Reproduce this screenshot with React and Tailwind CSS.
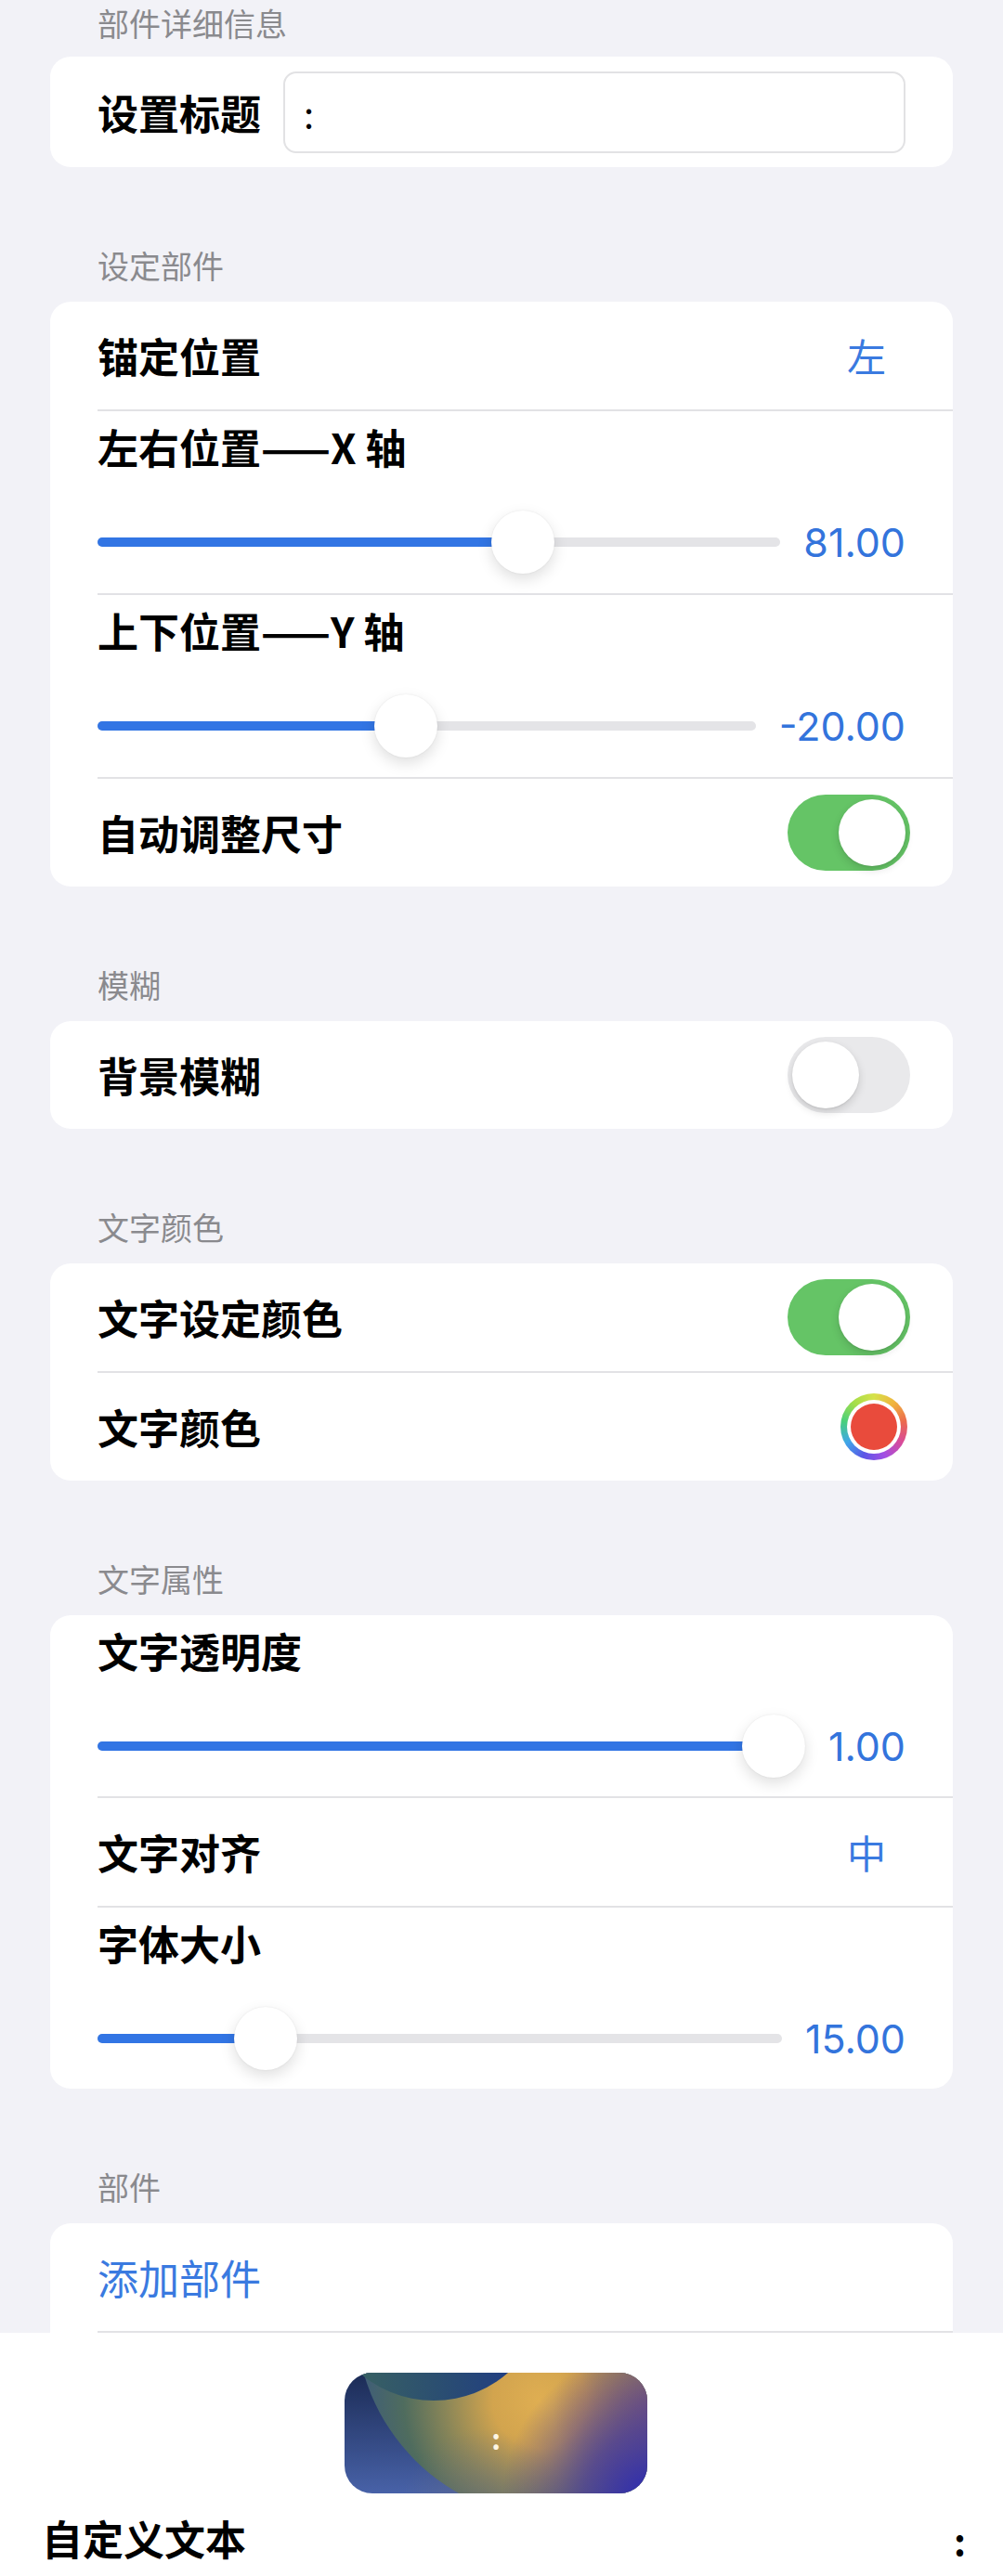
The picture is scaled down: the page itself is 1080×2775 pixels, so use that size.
import React from 'react';

const LABEL = "text-[44px] leading-[52px] font-semibold text-black whitespace-nowrap";
const NUM = "font-['Inter','Roboto',sans-serif] text-[43px] leading-[52px] text-[#3374dc] whitespace-nowrap";

function Header({ children, first }) {
  return (
    <div className={first ? "pt-[5px] pb-[16px] px-[105px]" : "pt-[86px] pb-[19px] px-[105px]"}>
      <div className="text-[34px] leading-[40px] text-[#8a8a8e]">{children}</div>
    </div>
  );
}

function Card({ children, cut }) {
  return (
    <div className={cut ? "mx-[54px] bg-white rounded-t-[22px] overflow-hidden" : "mx-[54px] bg-white rounded-[22px] overflow-hidden"}>
      {children}
    </div>
  );
}

function Divider() {
  return <div className="ml-[51px] h-[2px] bg-[#e2e2e5]" />;
}

function ValueRow({ label, value }) {
  return (
    <div className="h-[116px] pl-[51px] pr-[72px] flex items-center justify-between">
      <div className={LABEL}>{label}</div>
      <div className="text-[42px] leading-[52px] text-[#3a7ae0]">{value}</div>
    </div>
  );
}

function Toggle({ on }) {
  return (
    <div className={on ? "w-[132px] h-[82px] rounded-full p-[5px] flex justify-end bg-[#65c466]" : "w-[132px] h-[82px] rounded-full p-[5px] flex justify-start bg-[#e9e9eb]"}>
      <div className="w-[72px] h-[72px] rounded-full bg-white shadow-[0_4px_10px_rgba(0,0,0,0.14),0_1px_2px_rgba(0,0,0,0.08)]" />
    </div>
  );
}

function ToggleRow({ label, on }) {
  return (
    <div className="h-[116px] pl-[51px] pr-[46px] flex items-center justify-between">
      <div className={LABEL}>{label}</div>
      <Toggle on={on} />
    </div>
  );
}

function SliderRow({ label, value, frac, h }) {
  return (
    <div className={h + " px-[51px] pt-[12px] flex flex-col"}>
      <div className={LABEL}>{label}</div>
      <div className="mt-[42px] flex items-center gap-[25px]">
        <div className="relative flex-1 h-[70px]">
          <div className="absolute left-0 right-0 top-[30px] h-[10px] rounded-full bg-[#e4e4e7]" />
          <div
            className="absolute left-0 top-[30px] h-[10px] rounded-full bg-[#3275e4]"
            style={{ width: `calc(34px + ${frac} * (100% - 68px))` }}
          />
          <div
            className="absolute top-[1px] h-[68px] w-[68px] rounded-full bg-white shadow-[0_6px_16px_rgba(0,0,0,0.13),0_0_2px_rgba(0,0,0,0.08)]"
            style={{ left: `calc(${frac} * (100% - 68px))` }}
          />
        </div>
        <div className={NUM}>{value}</div>
      </div>
    </div>
  );
}

function ColorWell() {
  return (
    <div className="w-[72px] h-[72px] rounded-full p-[7px] bg-[conic-gradient(from_0deg,#d6e24a,#f0b43e,#ec6a4e,#d84a9a,#a24ee4,#5a56e6,#3fa6e8,#48d07c,#a4de4a,#d6e24a)]">
      <div className="w-full h-full rounded-full bg-white p-[4px]">
        <div className="w-full h-full rounded-full bg-[#e94b3c]" />
      </div>
    </div>
  );
}

function Wallpaper() {
  return (
    <svg viewBox="0 0 326 130" preserveAspectRatio="none" className="absolute inset-0 w-full h-full">
      <defs>
        <linearGradient id="wpBase" x1="0" y1="0" x2="0" y2="1">
          <stop offset="0" stopColor="#1b2b55" />
          <stop offset="1" stopColor="#4862a8" />
        </linearGradient>
        <radialGradient id="wpGold" gradientUnits="userSpaceOnUse" cx="210" cy="30" r="195">
          <stop offset="0" stopColor="#dfae52" />
          <stop offset="0.26" stopColor="#d2a44e" />
          <stop offset="0.52" stopColor="#8a8658" />
          <stop offset="0.75" stopColor="#4f6c5e" />
          <stop offset="1" stopColor="#3d5c7a" />
        </radialGradient>
        <radialGradient id="wpMauve" gradientUnits="userSpaceOnUse" cx="335" cy="40" r="110">
          <stop offset="0" stopColor="#8a5a72" stopOpacity="0.95" />
          <stop offset="0.5" stopColor="#a2705e" stopOpacity="0.5" />
          <stop offset="1" stopColor="#a2705e" stopOpacity="0" />
        </radialGradient>
        <radialGradient id="wpBlue" gradientUnits="userSpaceOnUse" cx="330" cy="135" r="160">
          <stop offset="0" stopColor="#2c2ab4" stopOpacity="1" />
          <stop offset="0.45" stopColor="#43389e" stopOpacity="0.75" />
          <stop offset="1" stopColor="#43389e" stopOpacity="0" />
        </radialGradient>
        <radialGradient id="wpLow" gradientUnits="userSpaceOnUse" cx="150" cy="150" r="90">
          <stop offset="0" stopColor="#6a6c7c" stopOpacity="0.55" />
          <stop offset="1" stopColor="#6a6c7c" stopOpacity="0" />
        </radialGradient>
        <linearGradient id="wpMoon" x1="0" y1="0" x2="1" y2="0">
          <stop offset="0" stopColor="#3f6a5c" />
          <stop offset="0.55" stopColor="#2a4d72" />
          <stop offset="1" stopColor="#1c368a" />
        </linearGradient>
      </defs>
      <rect width="326" height="130" fill="url(#wpBase)" />
      <circle cx="230" cy="-60" r="218" fill="url(#wpGold)" />
      <rect width="326" height="130" fill="url(#wpLow)" />
      <rect width="326" height="130" fill="url(#wpMauve)" />
      <rect width="326" height="130" fill="url(#wpBlue)" />
      <circle cx="96" cy="-92" r="122" fill="url(#wpMoon)" />
    </svg>
  );
}

export default function App() {
  return (
    <div className="w-[1080px] h-[2775px] overflow-hidden bg-[#f2f2f7] font-['Noto_Sans_CJK_SC','Noto_Sans',sans-serif]">
      <Header first>部件详细信息</Header>
      <Card>
        <div className="h-[119px] pl-[51px] pr-[51px] flex items-center gap-[24px]">
          <div className={LABEL}>设置标题</div>
          <div className="flex-1 h-[88px] rounded-[14px] border-2 border-[#e2e2e4] flex items-center pl-[20px]">
            <span className="text-[40px] leading-[48px] text-black">:</span>
          </div>
        </div>
      </Card>

      <Header>设定部件</Header>
      <Card>
        <ValueRow label="锚定位置" value="左" />
        <Divider />
        <SliderRow label="左右位置——X 轴" value="81.00" frac={0.636} h="h-[196px]" />
        <Divider />
        <SliderRow label="上下位置——Y 轴" value="-20.00" frac={0.465} h="h-[196px]" />
        <Divider />
        <ToggleRow label="自动调整尺寸" on />
      </Card>

      <Header>模糊</Header>
      <Card>
        <ToggleRow label="背景模糊" on={false} />
      </Card>

      <Header>文字颜色</Header>
      <Card>
        <ToggleRow label="文字设定颜色" on />
        <Divider />
        <div className="h-[116px] pl-[51px] pr-[49px] flex items-center justify-between">
          <div className={LABEL}>文字颜色</div>
          <ColorWell />
        </div>
      </Card>

      <Header>文字属性</Header>
      <Card>
        <SliderRow label="文字透明度" value="1.00" frac={1} h="h-[195px]" />
        <Divider />
        <ValueRow label="文字对齐" value="中" />
        <Divider />
        <SliderRow label="字体大小" value="15.00" frac={0.22} h="h-[195px]" />
      </Card>

      <Header>部件</Header>
      <Card cut>
        <div className="h-[116px] pl-[51px] flex items-center">
          <div className="text-[44px] leading-[52px] text-[#3a7ae0]">添加部件</div>
        </div>
        <Divider />
      </Card>

      <div className="bg-white h-[263px] pt-[43px]">
        <div className="relative ml-[371px] w-[326px] h-[130px] rounded-[30px] overflow-hidden flex items-center justify-center">
          <Wallpaper />
          <span className="relative mt-[10px] text-[30px] leading-[30px] font-semibold text-[#fdf6e4]">:</span>
        </div>
        <div className="mt-[22px] pl-[45px] pr-[40px] flex items-end justify-between">
          <div className="text-[44px] leading-[52px] font-semibold text-black">自定义文本</div>
          <div className="text-[40px] leading-[48px] font-semibold text-black">:</div>
        </div>
      </div>
    </div>
  );
}
